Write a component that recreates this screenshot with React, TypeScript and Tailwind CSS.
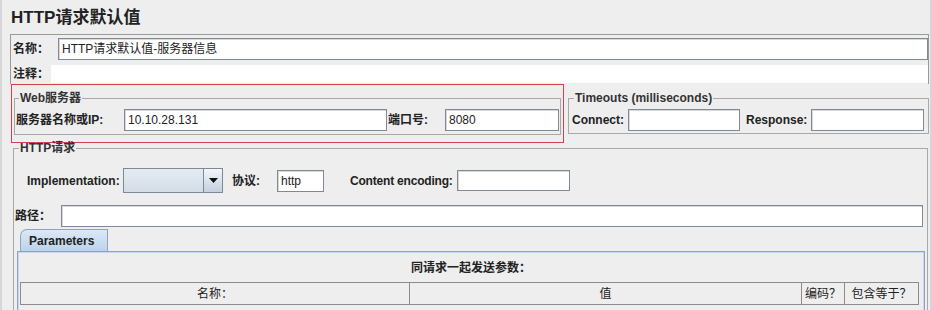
import React from "react";

const font = "font-['Liberation_Sans','Noto_Sans_CJK_SC',sans-serif]";

function Field({ w, value = "", h = "h-[22px]" }: { w: string; value?: string; h?: string }) {
  return (
    <div className={`${w} ${h} flex items-center border border-[#7f8a96] bg-white pl-[3px] text-[12px] text-[#222] shadow-[inset_1px_1px_0_#d8d8d8]`}>
      {value}
    </div>
  );
}

function Label({ w, children, className = "" }: { w: string; children: React.ReactNode; className?: string }) {
  return <span className={`${w} shrink-0 text-[12px] font-bold text-[#222] ${className}`}>{children}</span>;
}

export default function App() {
  return (
    <div className={`${font} h-[310px] w-[932px] overflow-hidden bg-[#eeeeee] shadow-[inset_2px_0_0_#d6d6d6,inset_-2px_0_0_#d6d6d6]`}>
      {/* title */}
      <div className="h-[34px] pl-[11px] pt-[8px] text-[17px] font-bold leading-[20px] text-[#222]">HTTP请求默认值</div>

      {/* name / comment */}
      <div className="ml-[10px] w-[919px] border-x border-t border-[#9a9a9a] pb-[1px] pl-[2px] pt-[3px]">
        <div className="flex h-[22px] items-center">
          <Label w="w-[45px]">名称：</Label>
          <Field w="w-[870px]" value="HTTP请求默认值-服务器信息" />
        </div>
        <div className="mt-[5px] flex h-[18px] items-center">
          <Label w="w-[38px]">注释：</Label>
          <div className="h-[18px] w-[877px] bg-white" />
        </div>
      </div>

      {/* server + timeouts */}
      <div className="flex items-start">
        <div className="ml-[11px] h-[59px] w-[553px] border border-[#d2414f] px-[2px] pt-[6px]">
          <fieldset className="h-[44px] border border-[#a8a8a8]">
            <legend className="ml-[4px] px-[1px] text-[12px] font-bold leading-[14px] text-[#333]">Web服务器</legend>
            <div className="mt-[4px] flex items-center pl-[1px]">
              <Label w="w-[108px]">服务器名称或IP:</Label>
              <Field w="w-[263px]" value="10.10.28.131" />
              <Label w="w-[58px]" className="pl-[1px]">端口号:</Label>
              <Field w="w-[114px]" value="8080" />
            </div>
          </fieldset>
        </div>
        <fieldset className="ml-[4px] mt-[7px] h-[43px] w-[361px] border border-[#a8a8a8]">
          <legend className="ml-[5px] px-[1px] text-[12px] font-bold leading-[14px] text-[#333]">Timeouts (milliseconds)</legend>
          <div className="mt-[4px] flex items-center pl-[3px]">
            <Label w="w-[56px]">Connect:</Label>
            <Field w="w-[112px]" />
            <Label w="w-[71px]" className="pl-[6px]">Response:</Label>
            <Field w="w-[113px]" />
          </div>
        </fieldset>
      </div>

      {/* HTTP request */}
      <fieldset className="ml-[13px] h-[200px] w-[915px] border border-[#a8a8a8]">
        <legend className="ml-[5px] px-[1px] text-[12px] font-bold leading-[10px] text-[#333]">HTTP请求</legend>
        <div className="mt-[15px] flex h-[25px] items-center pl-[13px]">
          <Label w="w-[96px]">Implementation:</Label>
          <div className="flex h-[25px] w-[100px] border border-[#7a8a99] bg-gradient-to-b from-[#e6ebf1] to-[#d3dce6]">
            <div className="flex-1" />
            <div className="flex w-[19px] items-center justify-center border-l border-[#7a8a99] bg-gradient-to-b from-[#f4f7fa] to-[#c3d0de]">
              <svg width="9" height="5" viewBox="0 0 9 5">
                <path d="M0 0h9L4.5 5z" fill="#111" />
              </svg>
            </div>
          </div>
          <Label w="w-[45px]" className="ml-[9px]">协议:</Label>
          <Field w="w-[47px]" value="http" />
          <Label w="w-[107px]" className="ml-[26px] tracking-[-0.2px]">Content encoding:</Label>
          <Field w="w-[113px]" h="h-[21px]" />
        </div>
        <div className="mt-[12px] flex h-[22px] items-center pl-[1px]">
          <Label w="w-[46px]">路径：</Label>
          <Field w="w-[862px]" />
        </div>

        {/* tabs */}
        <div className="ml-[6px] mt-[2px] flex h-[22px] w-[88px] items-center rounded-tl-[7px] border-x border-t border-[#8ea3c4] bg-gradient-to-b from-[#dce8f5] to-[#bcd3ec] pl-[8px] text-[12px] font-bold text-[#222]">
          Parameters
        </div>
        <div className="ml-[3px] h-[60px] w-[908px] border-l border-r border-t border-[#8ea3c4] bg-[#eeeeee] shadow-[inset_1px_1px_0_#c9d8ea,inset_-1px_0_0_#c9d8ea]">
          <div className="flex h-[30px] items-center justify-center pt-[2px] text-[12px] font-bold text-[#222]">同请求一起发送参数：</div>
          <div className="ml-[2px] flex h-[23px] w-[899px] border-b border-[#8c8c8c] text-[12px] text-[#222]">
            <div className="flex w-[390px] items-center justify-center border border-b-0 border-[#8c8c8c]">名称：</div>
            <div className="flex w-[392px] items-center justify-center border-y border-r border-b-0 border-[#8c8c8c]">值</div>
            <div className="flex w-[43px] items-center justify-center border-y border-r border-b-0 border-[#8c8c8c]">编码？</div>
            <div className="flex w-[74px] items-center justify-center border-y border-r border-b-0 border-[#8c8c8c]">包含等于？</div>
          </div>
        </div>
      </fieldset>
    </div>
  );
}
